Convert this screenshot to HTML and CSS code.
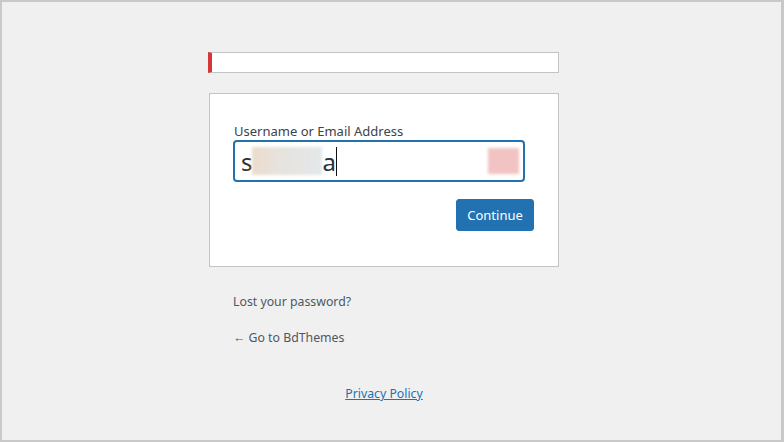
FILE: index.html
```html
<!DOCTYPE html>
<html lang="en">
<head>
<meta charset="utf-8">
<title>Log In</title>
<link rel="stylesheet" href="styles.css">
</head>
<body>
<div class="frame">
  <div class="login">
    <div class="notice"></div>
    <form class="login-form">
      <label class="field-label" for="user">Username or Email Address</label>
      <div class="text-input" id="user" role="textbox">
        <span class="typed">s</span><span class="smudge smudge-name"></span><span class="typed">a</span><span class="caret"></span>
        <span class="smudge smudge-end"></span>
      </div>
      <div class="actions">
        <button type="button" class="btn-primary">Continue</button>
      </div>
    </form>
    <p class="nav"><a href="#">Lost your password?</a></p>
    <p class="backtoblog"><a href="#">&larr; Go to BdThemes</a></p>
  </div>
  <div class="privacy"><a href="#">Privacy Policy</a></div>
</div>
</body>
</html>
```
FILE: styles.css
```css
* { box-sizing: border-box; }

html, body {
  margin: 0;
  padding: 0;
  height: 100%;
}

body {
  font-family: "Noto Sans", "Open Sans", sans-serif;
  color: #3c434a;
  background: #c9c9c9;
}

.frame {
  height: 442px;
  border-style: solid;
  border-color: #c9c9c9;
  border-width: 2px 3px 2px 2px;
  background: #f0f0f1;
}

.login {
  width: 351px;
  margin-left: 206px;
  padding-top: 50px;
}

.notice {
  height: 21px;
  background: #fff;
  border: 1px solid #c3c4c7;
  border-left: 4px solid #d63638;
}

.login-form {
  margin: 20px 0 0 1px;
  width: 350px;
  height: 174px;
  padding: 28px 24px 0 24px;
  background: #fff;
  border: 1px solid #c3c4c7;
}

.field-label {
  display: block;
  font-size: 13px;
  line-height: 18px;
  color: #3c434a;
}

.text-input {
  position: relative;
  display: flex;
  align-items: center;
  width: 292px;
  height: 42px;
  margin-left: -1px;
  padding: 0 6px;
  border: 2px solid #2271b1;
  border-radius: 4px;
  font-size: 24px;
  color: #2c3338;
}

.typed {
  line-height: 1;
  position: relative;
  top: 1px;
}

.smudge {
  display: inline-block;
  filter: blur(1.5px);
}

.smudge-name {
  width: 70px;
  height: 28px;
  margin: 0 1px 0 -1px;
  background: linear-gradient(90deg, #eadccb 0%, #e7e2dc 35%, #e3e8ea 100%);
}

.caret {
  display: inline-block;
  width: 1px;
  height: 29px;
  margin-left: 0;
  background: #111;
}

/* autofill badge sitting at the right end of the field */
.smudge-end {
  position: absolute;
  right: 4px;
  top: 6px;
  width: 31px;
  height: 26px;
  background: #f2c3c3;
}

.actions {
  display: flex;
  justify-content: flex-end;
  margin-top: 17px;
}

.btn-primary {
  width: 78px;
  height: 32px;
  padding: 0;
  border: 1px solid #2271b1;
  border-radius: 3px;
  background: #2271b1;
  color: #fff;
  font-family: inherit;
  font-size: 13px;
}

.nav, .backtoblog {
  margin: 0;
  padding-left: 25px;
  font-size: 12.3px;
  line-height: 20px;
}

.nav { margin-top: 25px; }
.backtoblog { margin-top: 16px; }

.nav a, .backtoblog a {
  color: #50575e;
  text-decoration: none;
}

.privacy {
  width: 784px;
  margin-left: -10px;
  margin-top: 36px;
  text-align: center;
  font-size: 12.3px;
  line-height: 20px;
}

.privacy a {
  color: #2271b1;
  text-decoration: underline;
}
```
